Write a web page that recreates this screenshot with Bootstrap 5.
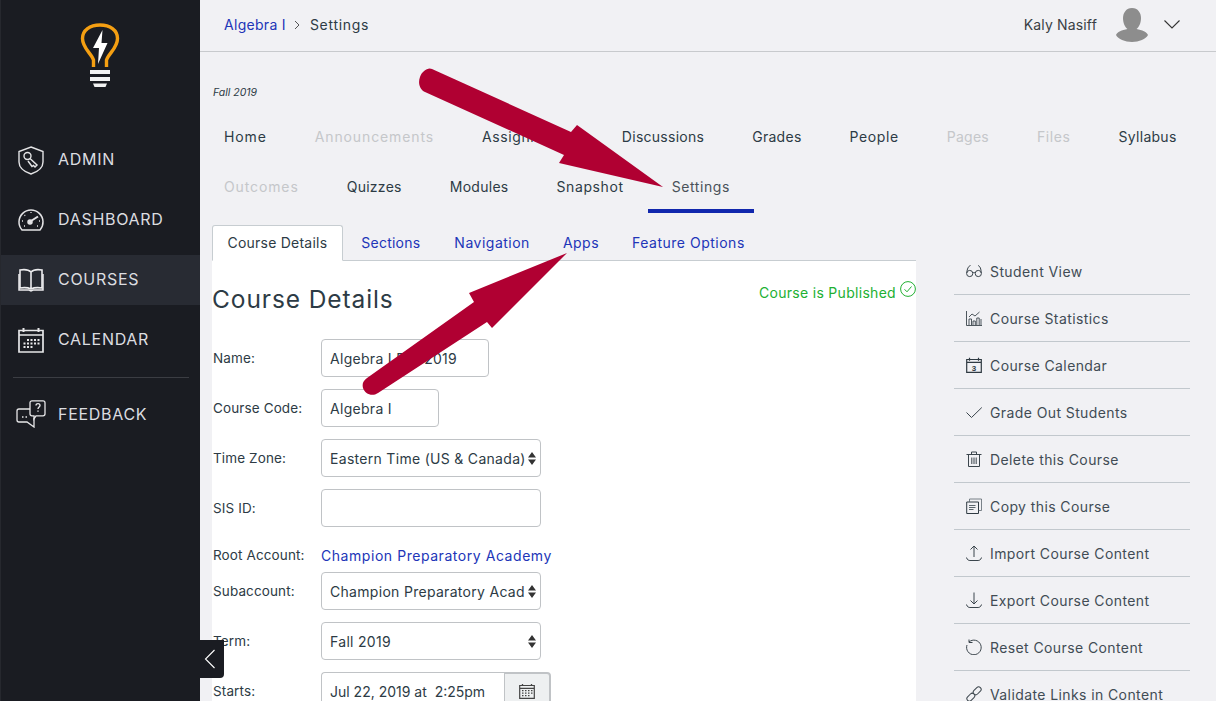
<!DOCTYPE html>
<html lang="en">
<head>
<meta charset="utf-8">
<title>Course Settings</title>
<link href="https://cdn.jsdelivr.net/npm/bootstrap@5.3.0/dist/css/bootstrap.min.css" rel="stylesheet">
<style>
html,body{height:100%;overflow:hidden}
body{font-family:Inter,"Liberation Sans",sans-serif;font-size:14px;letter-spacing:.3px;background:#f1f1f4;color:#2d3b45}
.shell{height:701px;position:relative}
.sidebar{width:200px;flex:none;background:#1a1c22;color:#d8d9db;border-left:1px solid #26282e}
.logo-wrap{height:135px;padding:23px 2px 0 0;text-align:center}
.side-link{height:50px;margin-bottom:10px;padding-left:17px;gap:14px;color:#dcdde0;font-size:16px;letter-spacing:.7px;text-decoration:none}
.side-link span{padding-bottom:2px}
.side-link.active-link{background:#282b33}
.side-link.ask-link{gap:12px;padding-left:15px}
.side-link.ask-link span{padding-bottom:0}
.side-rule{border-top:1px solid #3b3d43;margin:12px 11px 11px 12px}
.main-area{min-width:0}
.top-bar{height:52px;border-bottom:1px solid #c8cacd;padding:0 36px 2px 24px}
a.blue,.blue{color:#2135b8;text-decoration:none}
.crumb-sep{margin:0 10px 0 8px}
.crumb-now{letter-spacing:.7px}
.user-name{margin-right:19px;color:#3a3f45;letter-spacing:.15px}
.user-chev{margin-left:16px}
.term-note{font-size:10.5px;font-style:italic;letter-spacing:0;color:#2d3b45;padding:34px 0 0 13px;height:60px;line-height:14px}
.course-nav{height:100px;align-content:flex-start}
.course-item{height:50px;padding:0 24px;line-height:50px;color:#2d3b45;position:relative;font-size:14px;text-decoration:none}
.ls-wide{letter-spacing:.88px}
.ls-mid{letter-spacing:.6px}
.ls-tight{letter-spacing:.27px}
.course-item.off{color:#c5c7ca}
.course-item.on{color:#4a5259}
.course-item.on::after{content:"";position:absolute;left:0;right:0;bottom:-1px;height:4px;background:#1127ad;display:block}
.body-row{padding:13px 26px 0 12px;gap:38px}
.left-col{width:704px;flex:none}
.tab-row{border-color:#c7cdd1;height:36px}
.tab-row .nav-link{height:36px;padding:0 14.5px;line-height:34px;margin-right:2px;color:#2135b8;letter-spacing:.5px;border-radius:3px 3px 0 0}
.tab-row .nav-link.tab-close{letter-spacing:.23px;margin-right:3px}
.tab-row .nav-link.active{color:#2d3b45;border-color:#c7cdd1 #c7cdd1 #fff;background:#fff}
.detail-pane{background:#fff;height:440px;position:relative}
.title-line{height:78px;padding:21px 0 0 0}
.title-line h1{font-size:24.5px;font-weight:400;line-height:34px;margin:0;color:#2d3b45;letter-spacing:.9px}
.pub-note{color:#21b032;letter-spacing:.3px;line-height:20px;padding-top:9px;margin-top:-10px;gap:4px}
.pub-note span{padding-top:2px}
.field-line{margin-bottom:12px;min-height:38px}
.field-line.short-line{min-height:27px;padding-top:6px;margin-bottom:6px}
.field-name{width:109px;flex:none;padding-left:1px;font-size:13.5px;letter-spacing:.12px;color:#2d3b45}
.academy{letter-spacing:.55px}
.form-control,.form-select{height:38px;border:1px solid #c0c3c6;border-radius:4px;font-size:14px;letter-spacing:.3px;color:#2d3b45;padding:0 8px;background-color:#fff;box-shadow:none}
.w-name{width:168px}.w-code{width:118px}.w-wide{width:220px}
.form-select{padding-right:15px;background-position:right 4px center;background-size:8px 13px;background-image:url("data:image/svg+xml,%3Csvg xmlns='http://www.w3.org/2000/svg' viewBox='0 0 8 13'%3E%3Cpath fill='%23333' d='M4 0l4 5.5H0zM4 13L0 7.500h8z'/%3E%3C/svg%3E")}
.date-group{width:230px}
.date-group .form-control{width:183px;flex:none;letter-spacing:0}
.date-btn{width:47px;height:38px;background:#eef0f1;border:2px solid #c0c3c6;border-left-width:1px;border-radius:0 4px 4px 0;padding:0;display:flex;align-items:center;justify-content:center}
.side-menu{width:236px;flex:none;margin-top:23px}
.side-menu .list-group-item{background:transparent;border:0;border-bottom:1px solid #c2c8cd;height:47px;padding:0 0 0 12px;gap:8px;color:#414c54;letter-spacing:.4px;border-radius:0}
.side-menu svg{width:16px;height:16px;flex:none}
.collapse-tab{position:absolute;left:200px;top:640px;width:24px;height:38px;padding-right:4px;background:#1a1c22;border-radius:0 0 4px 0;display:flex;align-items:center;justify-content:center}
.arrow-layer{position:absolute;left:0;top:0;pointer-events:none}
</style>
</head>
<body>
<div class="shell d-flex">
  <aside class="sidebar">
    <div class="logo-wrap">
      <svg width="40" height="64" viewBox="0 0 40 64" aria-hidden="true">
        <path d="M13.500 44 V37 C11 30 2.500 25 2.500 15.500 C2.500 7 10 2 20 2 C30 2 37.500 7 37.500 15.500 C37.500 25 29 30 26.500 37 V44" fill="none" stroke="#f59f12" stroke-width="3.400"/>
        <path d="M22.500 7 L13 25 H19 L18 41 L27.500 20 H21.500 Z" fill="#fff"/>
        <path d="M10 47 H30 V51 H10 Z M10 54 H30 V58 H10 Z M13 60.500 H27 L25.500 64 H14.500 Z" fill="#f2f2f2"/>
      </svg>
    </div>
    <a class="side-link d-flex align-items-center" href="#">
      <svg width="26" height="29" viewBox="0 0 26 29" fill="none" stroke="#e3e3e5" stroke-width="1.400" aria-hidden="true"><path d="M13 1 L25 5.500 V16 C25 22 19 26 13 28 C7 26 1 22 1 16 V5.500 Z"/><circle cx="9.500" cy="10" r="3.500"/><path d="M12 12.500 L19 19 L17 21 L15.500 19.500 L14 20.500 L10 15" stroke-width="1.500"/></svg>
      <span>ADMIN</span>
    </a>
    <a class="side-link d-flex align-items-center" href="#">
      <svg width="26" height="26" viewBox="0 0 26 26" fill="none" stroke="#e3e3e5" stroke-width="1.500" aria-hidden="true"><path d="M4 23 A12 12 0 1 1 22 23 Z"/><circle cx="12" cy="15" r="2" fill="#e3e3e5"/><path d="M13 14 L20 9.500" stroke-width="2"/><path d="M13 5v1M6.500 8l.7.7M4 14h1M21 14h1M6 19h1M19 19h1" stroke-width="1.300"/></svg>
      <span>DASHBOARD</span>
    </a>
    <a class="side-link active-link d-flex align-items-center" href="#">
      <svg width="26" height="24" viewBox="0 0 26 24" fill="none" stroke="#ececee" stroke-width="1.600" aria-hidden="true"><path d="M13 4 C10 1 5 1.500 2 2 V20 C5 19.500 10 19.500 13 21 C16 19.500 21 19.500 24 20 V2 C21 1.500 16 1 13 4 V21"/><path d="M1 6 V22 H11 L13 23 L15 22 H25 V6" stroke-width="1.500"/></svg>
      <span>COURSES</span>
    </a>
    <a class="side-link d-flex align-items-center" href="#">
      <svg width="26" height="26" viewBox="0 0 26 26" aria-hidden="true"><path d="M1 3.500 H25 V25 H1 Z M1 8 H25" fill="none" stroke="#e6e6e8" stroke-width="1.700"/><path d="M5.500 1 V5 M20.500 1 V5" stroke="#e6e6e8" stroke-width="2"/><path d="M9 12h2v2H9zM12.500 12h2v2h-2zM16 12h2v2h-2zM19.500 12h2v2h-2zM5.500 15.500h2v2h-2zM9 15.500h2v2H9zM12.500 15.500h2v2h-2zM16 15.500h2v2h-2zM19.500 15.500h2v2h-2zM5.500 19h2v2h-2zM9 19h2v2H9zM12.500 19h2v2h-2z" fill="#e6e6e8"/></svg>
      <span>CALENDAR</span>
    </a>
    <div class="side-rule"></div>
    <a class="side-link ask-link d-flex align-items-center" href="#">
      <svg width="30" height="28" viewBox="0 0 30 28" fill="none" stroke="#e6e6e8" stroke-width="1.300" aria-hidden="true"><path d="M14 2 a2 2 0 0 1 2-2 H27 a2 2 0 0 1 2 2 V13 a2 2 0 0 1-2 2 H20 L18 18 V15 H16 a2 2 0 0 1-2-2 Z" transform="translate(0 .8)"/><path d="M14 9 H3 a2 2 0 0 0-2 2 V20 a2 2 0 0 0 2 2 H11 L18 27 V18"/><path d="M20 5.500 c0-2.500 4-2.500 4 0 c0 1.500-2 1.500-2 3.500 M22 10.500v1.300" stroke-width="1.400"/><path d="M6 17h1.500M9.500 17h1.500" stroke-width="1.300"/></svg>
      <span>FEEDBACK</span>
    </a>
  </aside>

  <div class="main-area flex-grow-1">
    <header class="top-bar d-flex align-items-center justify-content-between">
      <nav class="d-flex align-items-center" aria-label="breadcrumb">
        <a class="blue" href="#">Algebra I</a>
        <svg class="crumb-sep" width="6" height="10" viewBox="0 0 6 10" fill="none" stroke="#555" aria-hidden="true"><path d="M1 1l4 4-4 4"/></svg>
        <span class="crumb-now">Settings</span>
      </nav>
      <div class="d-flex align-items-center">
        <span class="user-name">Kaly Nasiff</span>
        <svg width="32" height="34" viewBox="0 0 32 34" aria-hidden="true"><path d="M16 0 C22 0 25 5 25 10 C25 15 23 19 20.500 21 C26 22 31 24 32 27 C30 31 23 34 16 34 C9 34 2 31 0 27 C1 24 6 22 11.500 21 C9 19 7 15 7 10 C7 5 10 0 16 0 Z" fill="#8d8d8d"/></svg>
        <svg class="user-chev" width="16" height="9" viewBox="0 0 16 9" fill="none" stroke="#333" stroke-width="1.100" aria-hidden="true"><path d="M.5.5 L8 8 L15.500.5"/></svg>
      </div>
    </header>

    <div class="term-note">Fall 2019</div>

    <nav class="course-nav d-flex flex-wrap">
      <a class="course-item ls-wide" href="#">Home</a>
      <a class="course-item off ls-wide" href="#">Announcements</a>
      <a class="course-item ls-mid" href="#">Assignments</a>
      <a class="course-item ls-tight" href="#">Discussions</a>
      <a class="course-item ls-tight" href="#">Grades</a>
      <a class="course-item ls-mid" href="#">People</a>
      <a class="course-item off ls-tight" href="#">Pages</a>
      <a class="course-item off ls-mid" href="#">Files</a>
      <a class="course-item ls-tight" href="#">Syllabus</a>
      <a class="course-item off ls-wide" href="#">Outcomes</a>
      <a class="course-item ls-tight" href="#">Quizzes</a>
      <a class="course-item ls-tight" href="#">Modules</a>
      <a class="course-item ls-mid" href="#">Snapshot</a>
      <a class="course-item on ls-mid" href="#">Settings</a>
    </nav>

    <div class="body-row d-flex">
      <div class="left-col">
        <ul class="nav nav-tabs tab-row">
          <li class="nav-item"><a class="nav-link active tab-close" href="#">Course Details</a></li>
          <li class="nav-item"><a class="nav-link tab-close" href="#">Sections</a></li>
          <li class="nav-item"><a class="nav-link" href="#">Navigation</a></li>
          <li class="nav-item"><a class="nav-link" href="#">Apps</a></li>
          <li class="nav-item"><a class="nav-link" href="#">Feature Options</a></li>
        </ul>
        <div class="detail-pane">
          <div class="title-line d-flex justify-content-between">
            <h1>Course Details</h1>
            <div class="pub-note d-flex align-items-start">
              <span>Course is Published</span>
              <svg width="16" height="16" viewBox="0 0 16 16" fill="none" stroke="#21b032" aria-hidden="true"><circle cx="8" cy="8" r="7.400"/><path d="M4.500 8.300 L7 10.800 L11.500 5.500"/></svg>
            </div>
          </div>
          <div class="field-line d-flex align-items-center"><label class="field-name">Name:</label><input class="form-control w-name" value="Algebra I Fall 2019"></div>
          <div class="field-line d-flex align-items-center"><label class="field-name">Course Code:</label><input class="form-control w-code" value="Algebra I"></div>
          <div class="field-line d-flex align-items-center"><label class="field-name">Time Zone:</label><select class="form-select w-wide"><option>Eastern Time (US &amp; Canada)</option></select></div>
          <div class="field-line d-flex align-items-center"><label class="field-name">SIS ID:</label><input class="form-control w-wide"></div>
          <div class="field-line short-line d-flex align-items-center"><span class="field-name">Root Account:</span><a class="blue academy" href="#">Champion Preparatory Academy</a></div>
          <div class="field-line d-flex align-items-center"><label class="field-name">Subaccount:</label><select class="form-select w-wide"><option>Champion Preparatory Academy</option></select></div>
          <div class="field-line d-flex align-items-center"><label class="field-name">Term:</label><select class="form-select w-wide"><option>Fall 2019</option></select></div>
          <div class="field-line d-flex align-items-center"><label class="field-name">Starts:</label>
            <div class="date-group d-flex"><input class="form-control rounded-end-0 border-end-0" value="Jul 22, 2019 at  2:25pm">
              <button class="date-btn" type="button" aria-label="Pick date"><svg width="16" height="16" viewBox="0 0 16 16" aria-hidden="true"><path d="M.7 2.500 H15.300 V15.300 H.7 Z M.7 5.300 H15.300" fill="none" stroke="#444" stroke-width="1.200"/><path d="M3.500 1v2M12.500 1v2" stroke="#444" stroke-width="1.300"/><path d="M3 7h1.500v1.300H3zM6 7h1.500v1.300H6zM9 7h1.500v1.300H9zM12 7h1.500v1.300H12zM3 9.500h1.500v1.300H3zM6 9.500h1.500v1.300H6zM9 9.500h1.500v1.300H9zM12 9.500h1.500v1.300H12zM3 12h1.500v1.300H3zM6 12h1.500v1.300H6zM9 12h1.500v1.300H9z" fill="#444"/></svg></button>
            </div>
          </div>
        </div>
      </div>

      <div class="side-menu list-group">
        <a class="list-group-item d-flex align-items-center" href="#"><svg viewBox="0 0 16 16" fill="none" stroke="#3b454c" aria-hidden="true"><circle cx="3.700" cy="10.500" r="3.100"/><circle cx="12.300" cy="10.500" r="3.100"/><path d="M6.800 10 C7.500 9.300 8.500 9.300 9.200 10 M.8 10 C1 6 2.500 3 4.500 2.500 M15.200 10 C15.200 6 14 3 12 2.500"/></svg><span>Student View</span></a>
        <a class="list-group-item d-flex align-items-center" href="#"><svg viewBox="0 0 16 16" fill="none" stroke="#3b454c" stroke-width=".9" aria-hidden="true"><path d="M.5 1 V15.500 H16 M3 15 V9 H5.500 V15 M7 15 V11 H9.300 V15 M10.800 15 V8 H13.200 V15 M15 15 V9 M3 7 L6 4 L9 6 L13.500 2"/></svg><span>Course Statistics</span></a>
        <a class="list-group-item d-flex align-items-center" href="#"><svg viewBox="0 0 16 16" aria-hidden="true"><path d="M.7 2.500 H15.300 V15.300 H.7 Z M.7 5.300 H15.300" fill="none" stroke="#2f3a42" stroke-width="1.200"/><path d="M3.500 .8v3M12.500 .8v3" stroke="#2f3a42" stroke-width="1.200"/><text x="8" y="13.500" text-anchor="middle" font-size="8" font-weight="700" letter-spacing="0" fill="#2f3a42" font-family="Liberation Sans">3</text></svg><span>Course Calendar</span></a>
        <a class="list-group-item d-flex align-items-center" href="#"><svg viewBox="0 0 16 16" fill="none" stroke="#3b454c" aria-hidden="true"><path d="M.5 8.500 L5.500 13.500 L15.800 3.500"/></svg><span>Grade Out Students</span></a>
        <a class="list-group-item d-flex align-items-center" href="#"><svg viewBox="0 0 16 16" fill="none" stroke="#3b454c" aria-hidden="true"><path d="M.5 3.500 H15.500 M5.500 3.500 V1 H10.500 V3.500 M2.500 3.500 V15.500 H13.500 V3.500 M5.800 6.500 V13 M8 6.500 V13 M10.200 6.500 V13"/></svg><span>Delete this Course</span></a>
        <a class="list-group-item d-flex align-items-center" href="#"><svg viewBox="0 0 16 16" fill="none" stroke="#2f3a42" aria-hidden="true"><path d="M.7 4 H12.500 V15.500 H.7 Z"/><path d="M3.500 4 V1 H15.500 V12.500 H12.500" stroke="#5c666d" stroke-width=".8"/><path d="M3 7.500 H9.500 M3 9.500 H9.500 M3 11.500 H7.500" stroke="#5c666d" stroke-width="1.200"/></svg><span>Copy this Course</span></a>
        <a class="list-group-item d-flex align-items-center" href="#"><svg viewBox="0 0 16 16" fill="none" stroke="#3b454c" aria-hidden="true"><path d="M8 12 V1 M4.500 4.500 L8 1 L11.500 4.500 M.5 12.500 C1 15 3 15.500 4 15.500 H12 C13 15.500 15 15 15.500 12.500"/></svg><span>Import Course Content</span></a>
        <a class="list-group-item d-flex align-items-center" href="#"><svg viewBox="0 0 16 16" fill="none" stroke="#3b454c" aria-hidden="true"><path d="M8 .5 V12 M4.500 8.500 L8 12 L11.500 8.500 M.5 12.500 C1 15 3 15.500 4 15.500 H12 C13 15.500 15 15 15.500 12.500"/></svg><span>Export Course Content</span></a>
        <a class="list-group-item d-flex align-items-center" href="#"><svg viewBox="0 0 16 16" fill="none" stroke="#3b454c" aria-hidden="true"><path d="M3 3 A7.300 7.300 0 1 1 1 6 M3 .5 V3.500 H6.500"/></svg><span>Reset Course Content</span></a>
        <a class="list-group-item d-flex align-items-center" href="#"><svg viewBox="0 0 16 16" fill="none" stroke="#3b454c" aria-hidden="true"><g transform="rotate(-45 8 8)"><rect x="-1" y="5.500" width="9" height="5" rx="2.500"/><rect x="8" y="5.500" width="9" height="5" rx="2.500"/></g></svg><span>Validate Links in Content</span></a>
      </div>
    </div>
  </div>

  <div class="collapse-tab"><svg width="12" height="20" viewBox="0 0 12 20" fill="none" stroke="#fff" stroke-width="1.100" aria-hidden="true"><path d="M10.500 1 L1.500 10 L10.500 19"/></svg></div>

  <svg class="arrow-layer" width="1216" height="701" viewBox="0 0 1216 701" aria-hidden="true">
    <path fill="#b00032" d="M432 69 L571 132 L577 125 L663 187 L559 163 L564 155 L425 92 C419 89 418 82 420 77 C422 71 428 67 432 69 Z"/>
    <path fill="#b00032" d="M367 378 L474 302 L469 293 L567 253 L492 328 L487 322 L378 393 C372 397 365 394 363 388 C362 384 363 381 367 378 Z"/>
  </svg>
</div>
<script src="https://cdn.jsdelivr.net/npm/bootstrap@5.3.0/dist/js/bootstrap.bundle.min.js"></script>
</body>
</html>
